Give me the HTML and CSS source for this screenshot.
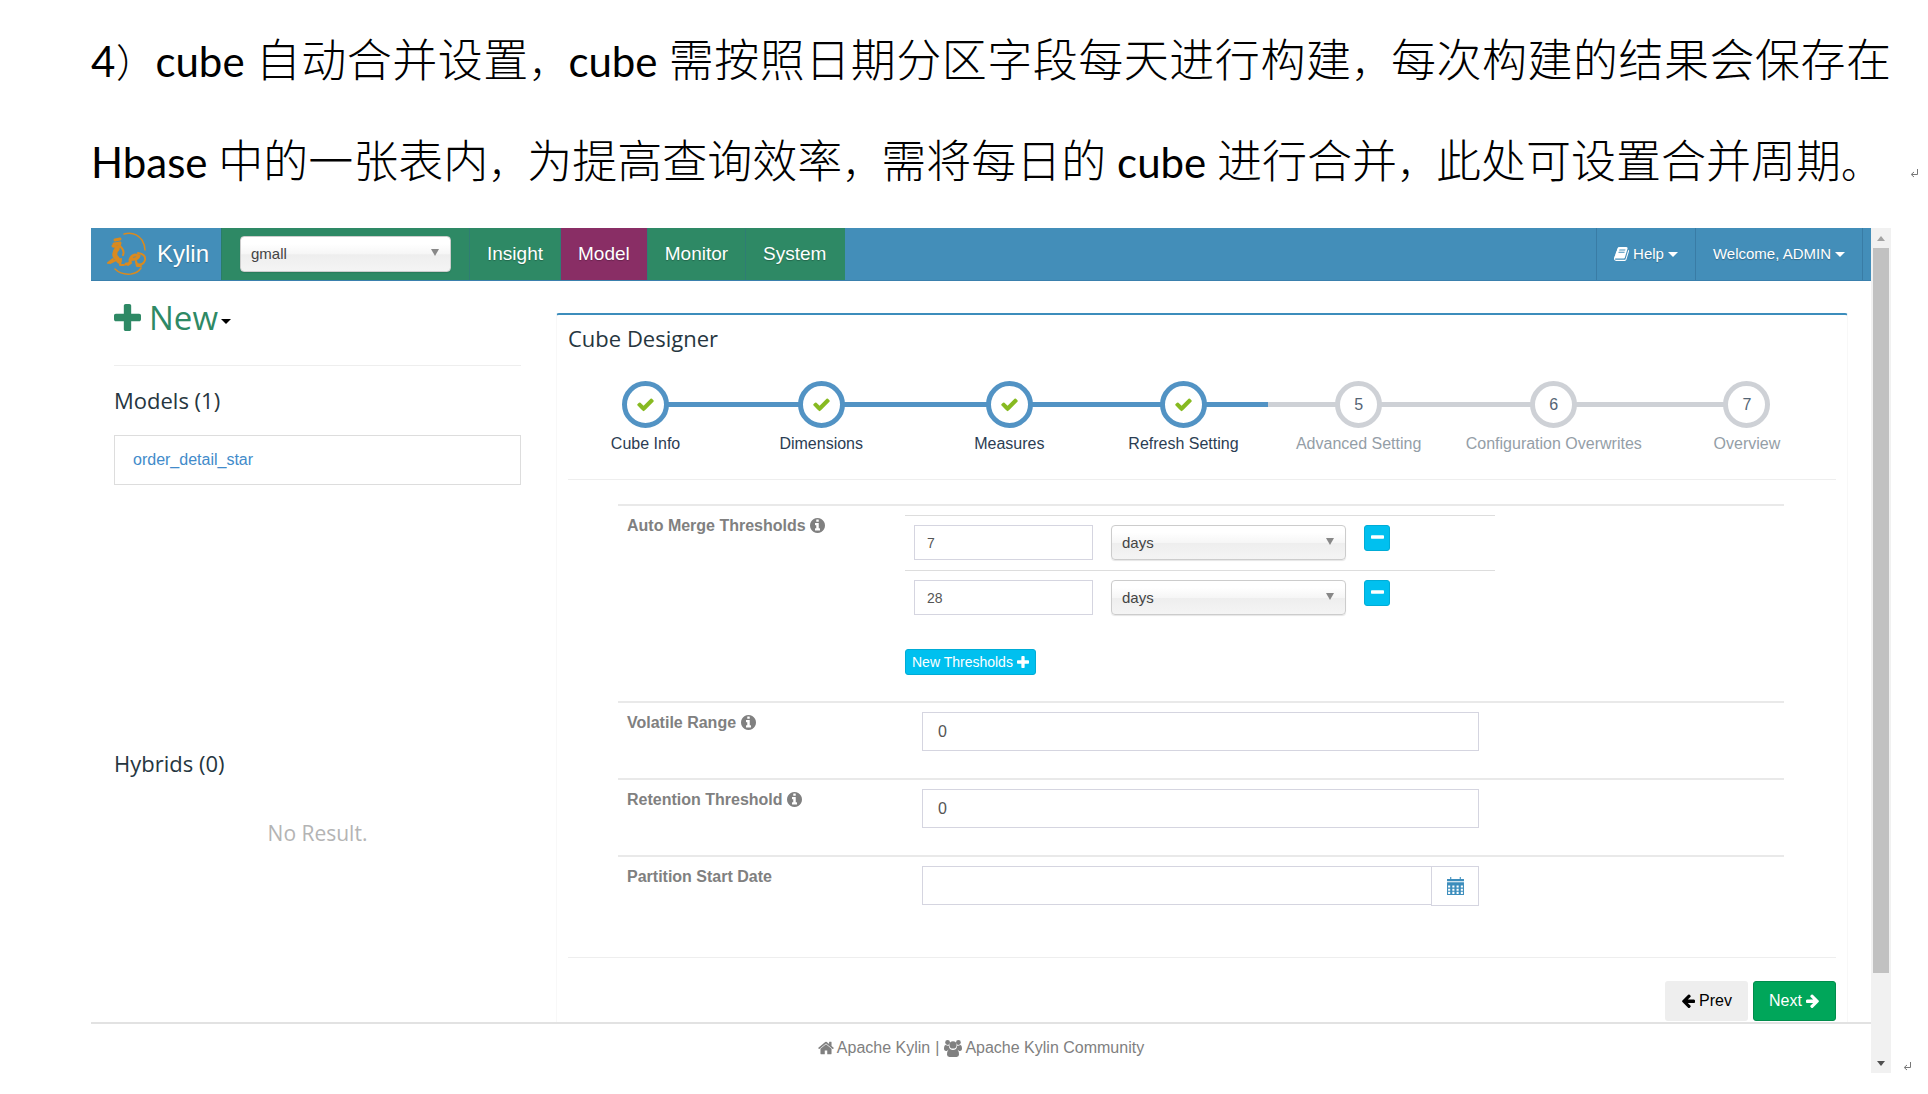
FILE: index.html
```html
<!DOCTYPE html>
<html lang="zh-CN">
<head>
<meta charset="utf-8">
<title>Kylin cube 自动合并设置</title>
<link rel="stylesheet" href="styles.css">
</head>
<body>
<svg class="sprite" aria-hidden="true">
  <symbol id="check" viewBox="0 0 1792 1792"><path d="M1671 566q0 40-28 68l-724 724-136 136q-28 28-68 28t-68-28l-136-136-362-362q-28-28-28-68t28-68l136-136q28-28 68-28t68 28l294 295 656-657q28-28 68-28t68 28l136 136q28 28 28 68z"/></symbol>
  <symbol id="plus" viewBox="192 128 1408 1408"><path d="M1600 736v192q0 40-28 68t-68 28h-416v416q0 40-28 68t-68 28h-192q-40 0-68-28t-28-68v-416h-416q-40 0-68-28t-28-68v-192q0-40 28-68t68-28h416v-416q0-40 28-68t68-28h192q40 0 68 28t28 68v416h416q40 0 68 28t28 68z"/></symbol>
  <symbol id="minus" viewBox="192 640 1408 384"><path d="M1600 736v192q0 40-28 68t-68 28h-1216q-40 0-68-28t-28-68v-192q0-40 28-68t68-28h1216q40 0 68 28t28 68z"/></symbol>
  <symbol id="info" viewBox="128 128 1536 1536"><path d="M1152 1376v-160q0-14-9-23t-23-9h-96v-512q0-14-9-23t-23-9h-320q-14 0-23 9t-9 23v160q0 14 9 23t23 9h96v320h-96q-14 0-23 9t-9 23v160q0 14 9 23t23 9h448q14 0 23-9t9-23zm-128-896v-160q0-14-9-23t-23-9h-192q-14 0-23 9t-9 23v160q0 14 9 23t23 9h192q14 0 23-9t9-23zm640 416q0 209-103 385.500t-279.500 279.500-385.500 103-385.500-103-279.500-279.500-103-385.500 103-385.500 279.500-279.500 385.500-103 385.500 103 279.500 279.500 103 385.500z"/></symbol>
  <symbol id="home" viewBox="64 192 1664 1408"><path d="M1472 992v480q0 26-19 45t-45 19h-384v-384h-256v384h-384q-26 0-45-19t-19-45v-480q0-1 .5-3t.5-3l575-474 575 474q1 2 1 6zm223-69l-62 74q-8 9-21 11h-3q-13 0-21-7l-692-577-692 577q-12 8-24 7-13-2-21-11l-62-74q-8-10-7-23.500t11-21.500l719-599q32-26 76-26t76 26l244 204v-195q0-14 9-23t23-9h192q14 0 23 9t9 23v408l219 182q10 8 11 21.500t-7 23.500z"/></symbol>
  <symbol id="arrow" viewBox="64 128 1600 1600"><path d="M1664 896v128q0 53-32.500 90.500t-84.500 37.500h-704l293 294q38 36 38 90t-38 90l-75 76q-37 37-90 37-52 0-91-37l-651-652q-37-37-37-90 0-52 37-91l651-650q38-38 91-38 52 0 90 38l75 74q38 38 38 91t-38 91l-293 293h704q52 0 84.500 37.500t32.500 90.500z"/></symbol>
  <symbol id="book" viewBox="64 128 1664 1536"><path d="M1703 478q40 57 18 129l-275 906q-19 64-76.500 107.500t-122.500 43.500h-923q-77 0-148.500-53.500t-99.500-131.500q-24-67-2-127 0-4 3-27t4-37q1-8-3-21.500t-3-19.500q2-11 8-21t16.500-23.500 16.500-23.500q23-38 45-91.500t30-91.500q3-10 .5-30t-.5-28q3-11 17-28t17-23q21-36 42-92t25-90q1-9-2.500-32t.5-28q4-13 22-30.500t22-22.500q19-26 42.500-84.500t27.500-96.500q1-8-3-25.500t-2-26.500q2-8 9-18t18-23 17-21q8-12 16.500-30.500t15-35 16-36 19.500-32 26.500-23.500 36-11.500 47.500 5.500l-1 3q38-9 51-9h761q74 0 114 56t18 130l-274 906q-36 119-71.500 153.500t-128.500 34.500h-869q-27 0-38 15-11 16-1 43 24 70 144 70h923q29 0 56-15.500t35-41.500l300-987q7-22 5-57 38 15 59 43zm-1064 2q-4 13 2 22.500t20 9.500h608q13 0 25.500-9.500t16.500-22.500l21-64q4-13-2-22.500t-20-9.500h-608q-13 0-25.500 9.500t-16.500 22.500zm-83 256q-4 13 2 22.500t20 9.500h608q13 0 25.500-9.500t16.500-22.500l21-64q4-13-2-22.500t-20-9.500h-608q-13 0-25.500 9.500t-16.500 22.500z"/></symbol>
  <symbol id="users" viewBox="0 0 30 28"><circle cx="6" cy="4" r="4"/><circle cx="24" cy="4" r="4"/><circle cx="15" cy="8" r="6"/><path d="M3 8q3 2 5 1 0 3 2 6-4 1-5 3H3q-3 0-3-3 0-7 3-7zM27 8q-3 2-5 1 0 3-2 6 4 1 5 3h2q3 0 3-3 0-7-3-7zM10 15q5 3 10 0 5 1 5 9 0 4-4 4H9q-4 0-4-4 0-8 5-9z"/></symbol>
  <symbol id="calendar" viewBox="0 0 16 17"><path d="M0 2h3V0h1v2h8V0h1v2h3v2H0zM0 5h16v12H0zM1 8v2h2V8zm4 0v2h2V8zm4 0v2h2V8zm4 0v2h2V8zM1 11v2h2v-2zm4 0v2h2v-2zm4 0v2h2v-2zm4 0v2h2v-2zM1 14v2h2v-2zm4 0v2h2v-2zm4 0v2h2v-2zm4 0v2h2v-2z" fill-rule="evenodd"/></symbol>
  <symbol id="return" viewBox="0 0 8 9"><path d="M7.500 0v5.500H2M4 3L1.200 5.500 4 8" fill="none" stroke="#777"/></symbol>
</svg>

<main class="document">
  <p class="note"><span class="latin">4</span><span class="stop">）</span><span class="latin">cube </span>自动合并设置<span class="stop">，</span><span class="latin">cube </span>需按照日期分区字段每天进行构建<span class="stop">，</span>每次构建的结果会保存在<span class="latin">Hbase </span>中的一张表内<span class="stop">，</span>为提高查询效率<span class="stop">，</span>需将每日的<span class="latin"> cube </span>进行合并<span class="stop">，</span>此处可设置合并周期<span class="stop">。</span><svg class="mark"><use href="#return"/></svg></p>

  <div class="figure">
    <div class="app">
      <header class="navbar">
        <a class="brand" href="#">
          <svg class="logo" viewBox="0 0 40 44" stroke="#d98a1f" stroke-linecap="round" stroke-linejoin="round"><path d="M17 2Q28-1 35 8q3 5 3 10M8 37q6 6 16 5 7-1 10-6" stroke-width="1.500"/><path d="M8 8l5-1M7 12l6-1-1 4-6-1" stroke-width="3"/><path d="M10 17q-3 3-2 7l4 5" stroke-width="5"/><path d="M13 14q5 5 3 9M14 27l-1 6h4M9 28l-6 3M6 27l-5 4" stroke-width="2"/><path d="M19 32q5 0 4-4 2-7 9-4-2 4-8 3" stroke-width="3"/><path d="M31 21q8 1 7 7-2 6-8 4l-1-3M24 31l-3 2M29 30l1 4h4" stroke-width="2"/></svg>
          Kylin
        </a>
        <div class="project"><span class="pick pick-project"><select aria-label="Project"><option>gmall</option></select></span></div>
        <nav class="tabs"><a href="#">Insight</a><a class="active" href="#">Model</a><a href="#">Monitor</a><a href="#">System</a></nav>
        <div class="account">
          <a href="#"><svg class="icon-book"><use href="#book"/></svg>Help<i class="caret"></i></a>
          <a href="#">Welcome, ADMIN<i class="caret"></i></a>
        </div>
      </header>

      <div class="columns">
        <aside class="side">
          <button class="new"><svg><use href="#plus"/></svg>New<i class="caret"></i></button>
          <section class="models">
            <h2>Models (1)</h2>
            <a class="model" href="#">order_detail_star</a>
          </section>
          <section>
            <h2>Hybrids (0)</h2>
            <p class="empty">No Result.</p>
          </section>
        </aside>

        <section class="panel">
          <h2>Cube Designer</h2>
          <ol class="steps">
            <li class="done"><span class="dot"><svg><use href="#check"/></svg></span>Cube Info</li>
            <li class="done"><span class="dot"><svg><use href="#check"/></svg></span>Dimensions</li>
            <li class="done"><span class="dot"><svg><use href="#check"/></svg></span>Measures</li>
            <li class="done"><span class="dot"><svg><use href="#check"/></svg></span>Refresh Setting</li>
            <li><span class="dot">5</span>Advanced Setting</li>
            <li><span class="dot">6</span>Configuration Overwrites</li>
            <li><span class="dot">7</span>Overview</li>
          </ol>
          <form class="settings">
            <div class="row row-merge">
              <span class="name">Auto Merge Thresholds <svg><use href="#info"/></svg></span>
              <div class="thresholds">
                <div class="threshold">
                  <input type="text" value="7" aria-label="First threshold">
                  <span class="pick"><select aria-label="First threshold unit"><option>days</option></select></span>
                  <button type="button" class="info-btn remove" aria-label="Remove"><svg><use href="#minus"/></svg></button>
                </div>
                <div class="threshold">
                  <input type="text" value="28" aria-label="Second threshold">
                  <span class="pick"><select aria-label="Second threshold unit"><option>days</option></select></span>
                  <button type="button" class="info-btn remove" aria-label="Remove"><svg><use href="#minus"/></svg></button>
                </div>
                <button type="button" class="info-btn add">New Thresholds<svg><use href="#plus"/></svg></button>
              </div>
            </div>
            <div class="row">
              <label class="name" for="volatile">Volatile Range <svg><use href="#info"/></svg></label>
              <div class="field"><input id="volatile" type="text" value="0"></div>
            </div>
            <div class="row">
              <label class="name" for="retention">Retention Threshold <svg><use href="#info"/></svg></label>
              <div class="field"><input id="retention" type="text" value="0"></div>
            </div>
            <div class="row">
              <label class="name" for="start">Partition Start Date</label>
              <div class="field"><input id="start" type="text"><button type="button" class="date" aria-label="Pick a date"><svg><use href="#calendar"/></svg></button></div>
            </div>
          </form>
          <div class="actions">
            <button class="prev"><svg><use href="#arrow"/></svg>Prev</button>
            <button class="next">Next<svg><use href="#arrow"/></svg></button>
          </div>
        </section>
      </div>

      <footer class="footer">
        <a href="#"><svg class="icon-home"><use href="#home"/></svg>Apache Kylin</a><span>|</span><a href="#"><svg class="icon-users"><use href="#users"/></svg>Apache Kylin Community</a>
      </footer>
    </div>
    <div class="scrollbar"><i class="up"></i><div class="thumb"></div><i class="down"></i></div>
    <svg class="mark"><use href="#return"/></svg>
  </div>
</main>
</body>
</html>
```
FILE: styles.css
```css
* { box-sizing: border-box; }
body {
  margin: 0;
  background: #fff;
  color: #2c3b45;
  font: 16px/20px "Liberation Sans", Arial, sans-serif;
}
a { color: inherit; text-decoration: none; }
button, input, select { font: inherit; color: inherit; margin: 0; }
button { border: 0; background: none; padding: 0; display: flex; align-items: center; }
svg { flex: none; fill: currentColor; }
h2 { margin: 0; font: 22px/30px "Open Sans", sans-serif; color: #263640; }
.sprite { display: none; }
.mark { width: 8px; height: 9px; }
.caret { border: 5px solid transparent; border-top-color: currentColor; border-bottom: 0; }

.document { padding: 7px 17px 20px 91px; }
.note {
  margin: 0 20px 19px 0;
  color: #000;
  font: 300 45px/101px "Noto Sans CJK SC", sans-serif;
  text-align: justify;
}
.note .latin { font: 400 42px/60px Lato, sans-serif; }
.note .stop { font-size: 39px; line-height: 60px; }
.note .mark { margin: 0 -40px 0 30px; }
.figure { display: flex; align-items: flex-end; }
.figure > .mark { margin: 0 0 2px 12px; }
.app { flex: 1; min-width: 0; }

/* Top bar */
.navbar {
  display: flex;
  height: 53px;
  background: #438eb9;
  border-bottom: 1px solid #3a80ad;
  color: #fff;
  text-shadow: 0 1px 1px rgba(0, 0, 0, .25);
}
.brand { display: flex; align-items: center; gap: 10px; width: 130px; padding-left: 16px; font-size: 24px; }
.logo { width: 40px; height: 44px; fill: none; }
.project { width: 248px; padding: 8px 18px; background: #2e8965; border-left: 1px solid #2a7d69; }
.tabs { display: flex; padding-right: 2px; background: #2e8965; font-size: 19px; line-height: 52px; }
.tabs a { padding: 0 17px; border-left: 1px solid #2f7d74; }
.tabs .active { background: #892e65; }
.account { display: flex; margin-left: auto; margin-right: 8px; font-size: 15px; border-right: 1px solid #397ca5; }
.account a { display: flex; align-items: center; gap: 4px; padding: 0 17px; border-left: 1px solid #397ca5; }
.icon-book { width: 15px; height: 14px; }

/* Drop-downs */
.pick { position: relative; display: block; width: 235px; height: 36px; font-size: 15px; color: #444; }
.pick-project { width: 211px; }
.pick select {
  appearance: none;
  width: 100%;
  height: 100%;
  padding: 0 10px;
  border: 1px solid #ccc;
  border-radius: 4px;
  background: linear-gradient(#fff 20%, #f6f6f6 50%, #eee 52%, #f4f4f4);
  box-shadow: 0 1px 1px rgba(0, 0, 0, .1);
}
.pick::after {
  content: "";
  position: absolute;
  top: 13px;
  right: 12px;
  border: 4px solid transparent;
  border-top: 7px solid #888;
  border-bottom: 0;
}

.columns { display: flex; }

/* Side column */
.side { width: 430px; margin-right: 35px; padding-left: 23px; }
.new {
  width: 100%;
  height: 85px;
  padding-bottom: 11px;
  border-bottom: 1px solid #eee;
  color: #2e8965;
  font: 33px/40px "Open Sans", sans-serif;
}
.new svg { width: 27px; height: 27px; margin-right: 8px; }
.new .caret { margin: 8px 0 0 3px; color: #000; }
.models { height: 362px; padding-top: 19px; }
.model { display: block; margin-top: 20px; padding: 14px 18px; border: 1px solid #ddd; color: #428bca; }
.side section:last-child { padding-top: 20px; }
.empty { margin: 40px 0 0; color: #b4b4b4; font: 21px/30px "Open Sans", sans-serif; text-align: center; }

/* Designer panel */
.panel {
  flex: 1;
  margin: 32px 23px 0 0;
  padding: 8px 11px 1px;
  border: 1px solid #f8f8f8;
  border-top: 2px solid #3c8dbc;
  border-bottom: 0;
  border-radius: 3px 3px 0 0;
}
.steps {
  display: grid;
  grid-template-columns: 155fr 196fr 180fr 168fr 182fr 208fr 178fr;
  margin: 28px 0 0;
  padding: 0 0 25px;
  border-bottom: 1px solid #eee;
  list-style: none;
  color: #949ea7;
}
.steps li { text-align: center; background: linear-gradient(#ced1d6, #ced1d6) 0 21px / 100% 5px no-repeat; }
.steps .done { color: #2b3d53; background-image: linear-gradient(#5293c4, #5293c4); }
.steps li:first-child { background-position: 100% 21px; background-size: 50% 5px; }
.steps li:last-child { background-size: 50% 5px; }
.dot {
  display: grid;
  place-items: center;
  width: 47px;
  height: 47px;
  margin: 0 auto 6px;
  border: 5px solid #ced1d6;
  border-radius: 50%;
  background: #fff;
  color: #546474;
}
.done .dot { border-color: #5293c4; color: #87ba21; }
.dot svg { width: 19px; height: 19px; }

.settings { margin: 24px 52px 0 50px; }
.row {
  display: grid;
  grid-template-columns: 287px 1fr;
  height: 77px;
  border-top: 2px solid #e9e9e9;
}
.row-merge { height: 197px; }
.name { padding: 10px 9px; color: #808080; font-weight: bold; }
.name svg { width: 15px; height: 15px; vertical-align: -2px; }
.settings input {
  min-width: 0;
  border: 1px solid #d5d5e0;
  padding: 0 15px;
  background: #fff;
  color: #555;
}
.thresholds { padding-top: 9px; }
.threshold { display: flex; align-items: flex-start; max-width: 590px; height: 55px; padding: 9px; border-top: 1px solid #ddd; }
.threshold input { width: 179px; height: 35px; margin-right: 18px; padding: 0 12px; font-size: 14px; }
.threshold .pick { height: 35px; }
.info-btn { border: 1px solid #00acd6; border-radius: 3px; background: #00c0ef; color: #fff; }
.remove { width: 26px; height: 26px; margin-left: 18px; padding-bottom: 2px; justify-content: center; }
.remove svg { width: 13px; height: 4px; }
.add { height: 26px; margin-top: 24px; padding: 0 6px; gap: 4px; font-size: 14px; }
.add svg { width: 12px; height: 12px; }
.field { display: flex; align-items: flex-start; max-width: 574px; padding: 9px 0 0 17px; }
.field input { flex: 1; height: 39px; }
.date { width: 48px; height: 40px; margin-left: -1px; border: 1px solid #d5d5e0; justify-content: center; color: #3c8dbc; }
.date svg { width: 17px; height: 18px; }

.actions { display: flex; justify-content: flex-end; gap: 5px; margin-top: 25px; padding-top: 23px; border-top: 1px solid #eee; }
.actions button { width: 83px; height: 40px; justify-content: center; gap: 4px; border-radius: 3px; }
.actions svg { width: 14px; height: 14px; }
.prev { background: #eee; color: #000; }
.next { background: #00a65a; color: #fff; border: 1px solid #008d4c; }
.next svg { transform: scaleX(-1); }

.footer {
  display: flex;
  justify-content: center;
  gap: 5px;
  height: 51px;
  padding-top: 14px;
  border-top: 2px solid #e2e2e2;
  color: #808080;
}
.footer a { display: flex; align-items: center; gap: 3px; height: 20px; }
.icon-home { width: 16px; height: 14px; }
.icon-users { width: 18px; height: 17px; }

/* Scroll bar */
.scrollbar { display: flex; flex-direction: column; align-items: center; align-self: stretch; width: 20px; background: #f1f1f1; }
.scrollbar i { border: 4px solid transparent; }
.scrollbar .up { border-top: 0; border-bottom: 5px solid #a3a3a3; margin: 8px 0 7px; }
.scrollbar .down { border-bottom: 0; border-top: 5px solid #505050; margin: 88px 0 7px; }
.thumb { flex: 1; width: 16px; background: #c1c1c1; }
```
